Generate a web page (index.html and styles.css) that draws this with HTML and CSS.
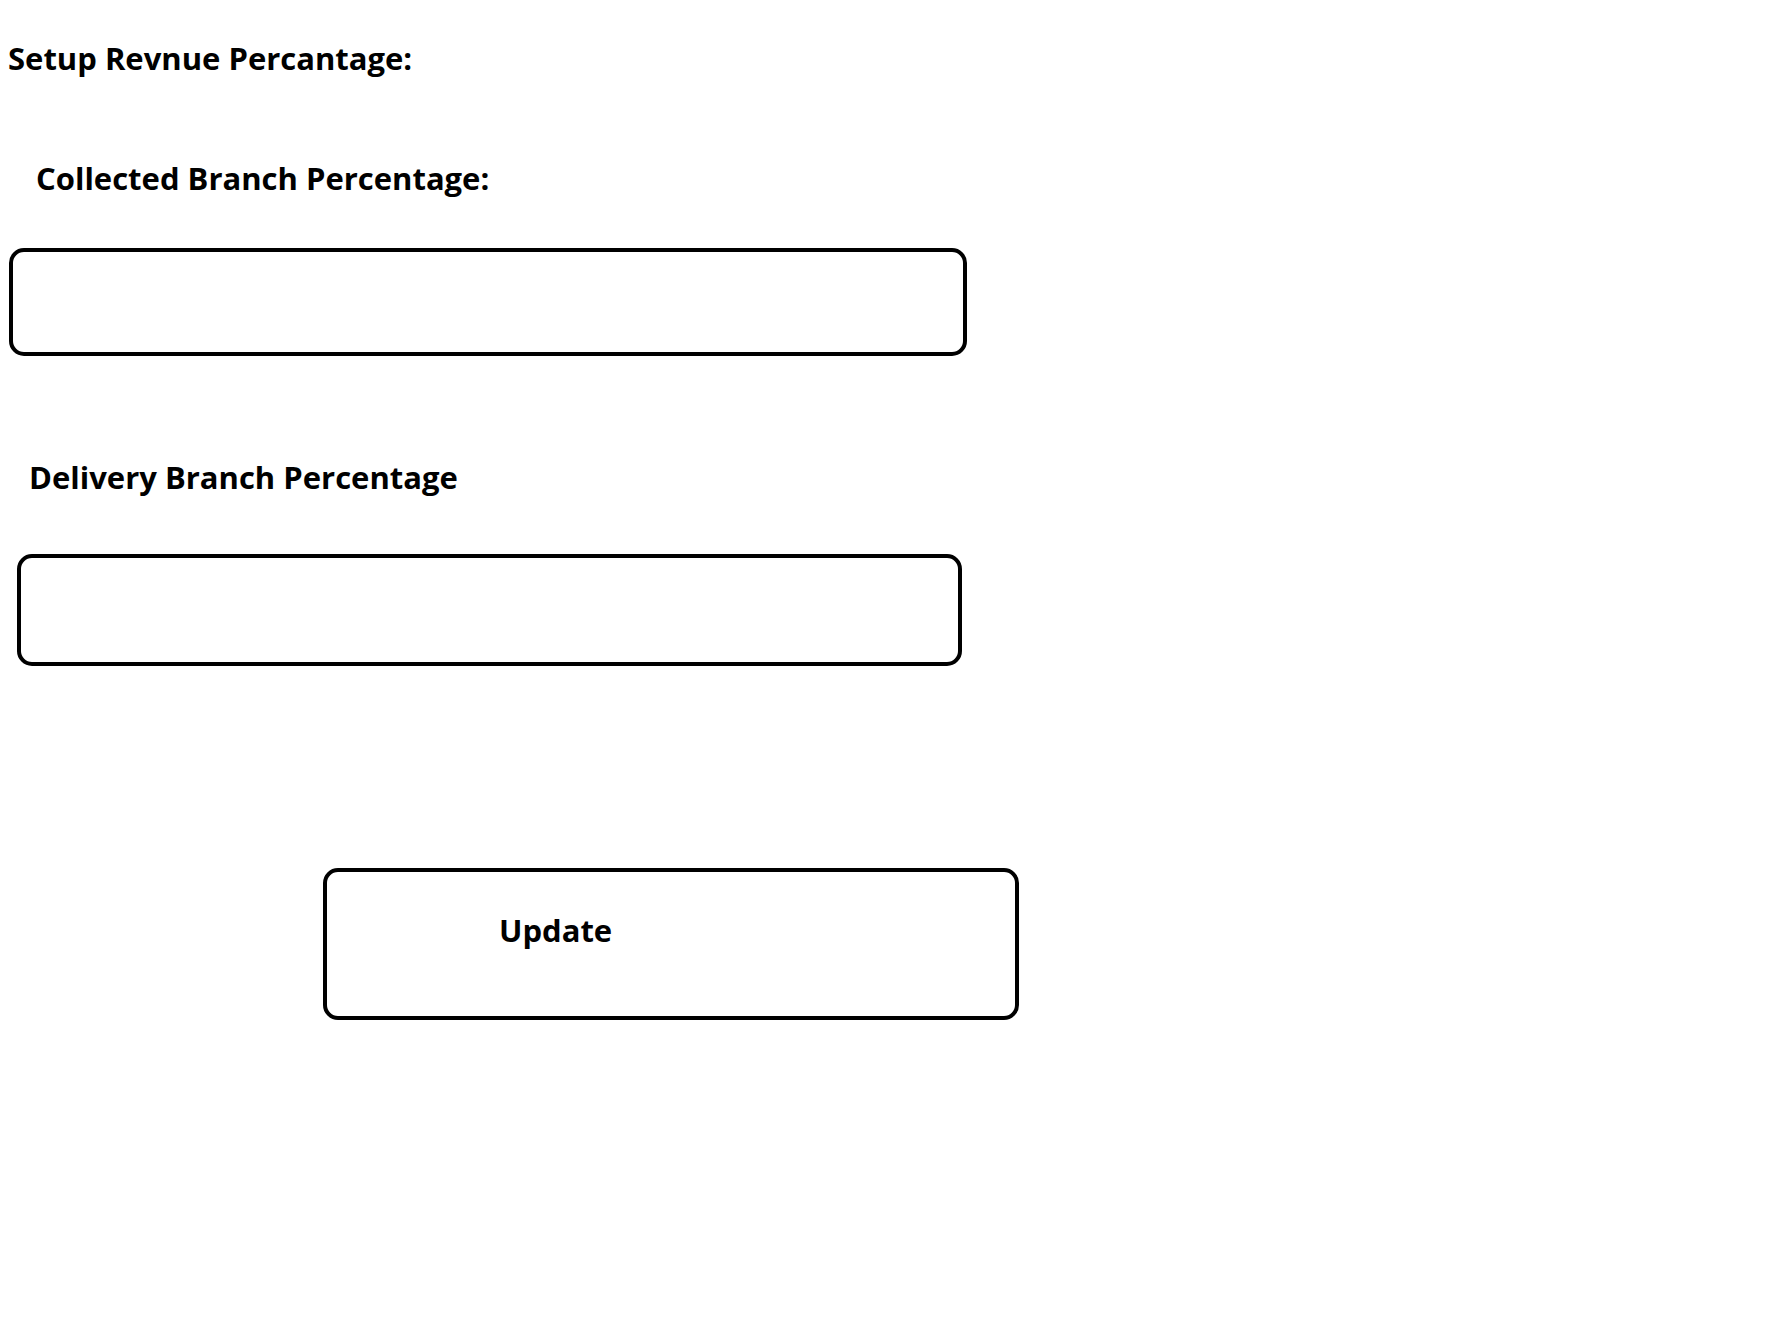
FILE: index.html
```html
<!DOCTYPE html>
<html lang="en">
<head>
<meta charset="utf-8">
<title>Setup Revenue Percentage</title>
<link rel="stylesheet" href="styles.css">
</head>
<body>
<form class="page">
  <h1 class="title">Setup Revnue Percantage:</h1>
  <label class="label label-collected" for="collected">Collected Branch Percentage:</label>
  <input class="field field-collected" id="collected" type="text">
  <label class="label label-delivery" for="delivery">Delivery Branch Percentage</label>
  <input class="field field-delivery" id="delivery" type="text">
  <button class="update" type="button">Update</button>
</form>
</body>
</html>
```
FILE: styles.css
```css
html, body {
  margin: 0;
  padding: 0;
  background: #ffffff;
}

.page {
  display: flex;
  flex-direction: column;
  align-items: flex-start;
  margin: 0;
  font-family: "Open Sans", "Liberation Sans", sans-serif;
  color: #000;
}

.title,
.label {
  margin: 0;
  font-size: 31px;
  font-weight: 700;
  line-height: 30px;
}

.title {
  margin-top: 43px;
  margin-left: 8px;
}

.label-collected {
  margin-top: 90px;
  margin-left: 36px;
}

.label-delivery {
  margin-top: 106px;
  margin-left: 29px;
}

.field {
  box-sizing: border-box;
  border: 4px solid #000;
  border-radius: 15px;
  background: #fff;
  padding: 0 16px;
  font: inherit;
  font-size: 24px;
  outline: none;
}

.field-collected {
  margin-top: 55px;
  margin-left: 9px;
  width: 958px;
  height: 108px;
}

.field-delivery {
  margin-top: 62px;
  margin-left: 17px;
  width: 945px;
  height: 112px;
}

.update {
  box-sizing: border-box;
  margin-top: 202px;
  margin-left: 323px;
  width: 696px;
  height: 152px;
  border: 4px solid #000;
  border-radius: 15px;
  background: #fff;
  padding: 43px 0 0 172px;
  text-align: left;
  display: flex;
  align-items: flex-start;
  font-family: "Open Sans", "Liberation Sans", sans-serif;
  font-size: 31px;
  font-weight: 700;
  line-height: 30px;
  color: #000;
  cursor: pointer;
}
```
